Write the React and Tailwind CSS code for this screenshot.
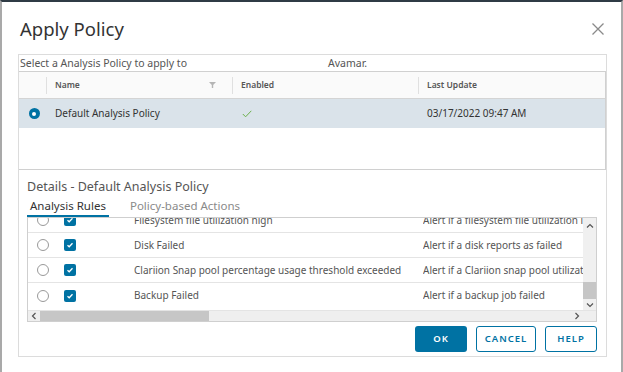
import React from "react";

const font = { fontFamily: "'Noto Sans', 'Open Sans', sans-serif" };

function CheckBox() {
  return (
    <div className="w-[12px] h-[12px] rounded-[2px] bg-[#0072a3] flex items-center justify-center">
      <svg width="8" height="8" viewBox="0 0 8 8">
        <path d="M1.5 4.2 L3.2 5.8 L6.5 2.3" stroke="white" strokeWidth="1.3" fill="none" />
      </svg>
    </div>
  );
}

function EmptyRadio() {
  return <div className="w-[12px] h-[12px] rounded-full border border-[#999] bg-white" />;
}

const rules = [
  ["Filesystem file utilization high", "Alert if a filesystem file utilization is high"],
  ["Disk Failed", "Alert if a disk reports as failed"],
  ["Clariion Snap pool percentage usage threshold exceeded", "Alert if a Clariion snap pool utilization exceeds"],
  ["Backup Failed", "Alert if a backup job failed"],
];

export default function App() {
  return (
    <div
      className="w-[623px] h-[372px] bg-white border-t-2 border-t-[#2f3b45] border-l-2 border-l-[#a9a9a9] border-r-2 border-r-[#a9a9a9] overflow-hidden flex flex-col"
      style={font}
    >
      {/* Title */}
      <div className="flex items-center justify-between pl-[18px] pr-[14px] pt-[4px] h-[50px]">
        <div className="text-[18.5px] text-[#333] leading-none">Apply Policy</div>
        <svg width="14" height="14" viewBox="0 0 14 14" className="mr-[2px]">
          <path d="M1.5 1.5 L12.5 12.5 M12.5 1.5 L1.5 12.5" stroke="#8a8a8a" strokeWidth="1.3" />
        </svg>
      </div>

      {/* Panel */}
      <div className="ml-[16px] mr-[14px] mt-[2px] h-[303px] border border-[#dcdcdc] flex flex-col">
        <div className="h-[16px] text-[10.5px] text-[#555] leading-[16px] pl-[1px] flex whitespace-nowrap">
          <span>Select a Analysis Policy to apply to</span>
          <span className="ml-[141px]">Avamar.</span>
        </div>

        {/* Top grid */}
        <div className="h-[99px] border border-[#d0d0d0] border-l-0 flex flex-col">
          <div className="h-[27px] bg-[#fafafa] border-b border-[#d4d4d4] flex items-center text-[8.5px] font-semibold text-[#565656]">
            <div className="w-[28px] h-[17px] border-r border-[#e0e0e0]" />
            <div className="w-[186px] h-[17px] border-r border-[#e0e0e0] flex items-center justify-between pl-[8px] pr-[16px]">
              <span>Name</span>
              <svg width="7" height="6" viewBox="0 0 7 6">
                <path d="M0 0 H7 L4.2 3 V6 H2.8 V3 Z" fill="#b5b5b5" />
              </svg>
            </div>
            <div className="w-[186px] h-[17px] border-r border-[#e0e0e0] flex items-center pl-[8px]">Enabled</div>
            <div className="flex-1 pl-[8px]">Last Update</div>
          </div>
          <div className="h-[29px] bg-[#dae3ea] flex items-center text-[10px] text-[#333]">
            <div className="w-[28px] flex items-center justify-center pl-[2px]">
              <div className="w-[11px] h-[11px] rounded-full bg-[#0072a3] flex items-center justify-center">
                <div className="w-[4px] h-[4px] rounded-full bg-white" />
              </div>
            </div>
            <div className="w-[186px] pl-[8px]">Default Analysis Policy</div>
            <div className="w-[186px] pl-[9px]">
              <svg width="10" height="8" viewBox="0 0 10 8">
                <path d="M0.8 4 L3.6 6.8 L9.3 0.8" stroke="#6bb04a" strokeWidth="1" fill="none" />
              </svg>
            </div>
            <div className="flex-1 pl-[8px]">03/17/2022 09:47 AM</div>
          </div>
          <div className="flex-1" />
        </div>

        {/* Details */}
        <div className="pl-[8px] pt-[8px] text-[12.5px] text-[#555] leading-[18px]">Details - Default Analysis Policy</div>
        <div className="flex items-end pl-[8px] h-[21px] text-[11.5px]">
          <div className="border-b-[2px] border-[#0072a3] px-[3px] pb-[1px] text-[#333]">Analysis Rules</div>
          <div className="ml-[21px] pb-[3px] text-[#8a8a8a]">Policy-based Actions</div>
        </div>

        {/* Rules grid */}
        <div className="ml-[8px] mr-[9px] h-[105px] border border-[#cfcfcf] flex flex-col">
          <div className="flex h-[92px]">
            <div className="flex-1 overflow-hidden">
              <div className="-mt-[10px]">
                {rules.map((r, i) => (
                  <div
                    key={i}
                    className={`h-[25px] flex items-center text-[10px] text-[#555] whitespace-nowrap ${i < rules.length - 1 ? "border-b border-[#e4e4e4]" : ""}`}
                  >
                    <div className="w-[28px] flex justify-center pl-[1px]"><EmptyRadio /></div>
                    <div className="w-[78px] pl-[8px]"><CheckBox /></div>
                    <div className="w-[289px] overflow-hidden">{r[0]}</div>
                    <div className="flex-1 overflow-hidden">{r[1]}</div>
                  </div>
                ))}
              </div>
            </div>
            <div className="w-[13px] bg-[#f0f0f0] flex flex-col items-center">
              <svg width="8" height="6" viewBox="0 0 8 6" className="mt-[5px]">
                <path d="M1 4.5 L4 1.5 L7 4.5" stroke="#555" strokeWidth="1.2" fill="none" />
              </svg>
              <div className="flex-1" />
              <div className="w-[13px] h-[17px] bg-[#c6c6c6]" />
              <svg width="8" height="6" viewBox="0 0 8 6" className="mt-[3px] mb-[2px]">
                <path d="M1 1.5 L4 4.5 L7 1.5" stroke="#555" strokeWidth="1.2" fill="none" />
              </svg>
            </div>
          </div>
          <div className="flex-1 bg-[#efefef] flex items-center border-t border-[#e4e4e4]">
            <svg width="6" height="8" viewBox="0 0 6 8" className="ml-[3px]">
              <path d="M4.5 1 L1.5 4 L4.5 7" stroke="#555" strokeWidth="1.2" fill="none" />
            </svg>
            <div className="ml-[3px] w-[169px] h-full bg-[#c6c6c6]" />
            <div className="flex-1" />
            <svg width="6" height="8" viewBox="0 0 6 8" className="mr-[16px]">
              <path d="M1.5 1 L4.5 4 L1.5 7" stroke="#555" strokeWidth="1.2" fill="none" />
            </svg>
          </div>
        </div>

        {/* Buttons */}
        <div className="flex justify-end gap-[9px] mr-[9px] mt-[4px]">
          <button className="w-[52px] h-[26px] rounded-[3px] bg-[#0072a3] text-white text-[9.5px] font-semibold tracking-[1px]">OK</button>
          <button className="w-[60px] h-[26px] rounded-[3px] border border-[#0072a3] text-[#0072a3] text-[9.5px] font-semibold tracking-[1px]">CANCEL</button>
          <button className="w-[52px] h-[26px] rounded-[3px] border border-[#0072a3] text-[#0072a3] text-[9.5px] font-semibold tracking-[1px]">HELP</button>
        </div>
      </div>
    </div>
  );
}
